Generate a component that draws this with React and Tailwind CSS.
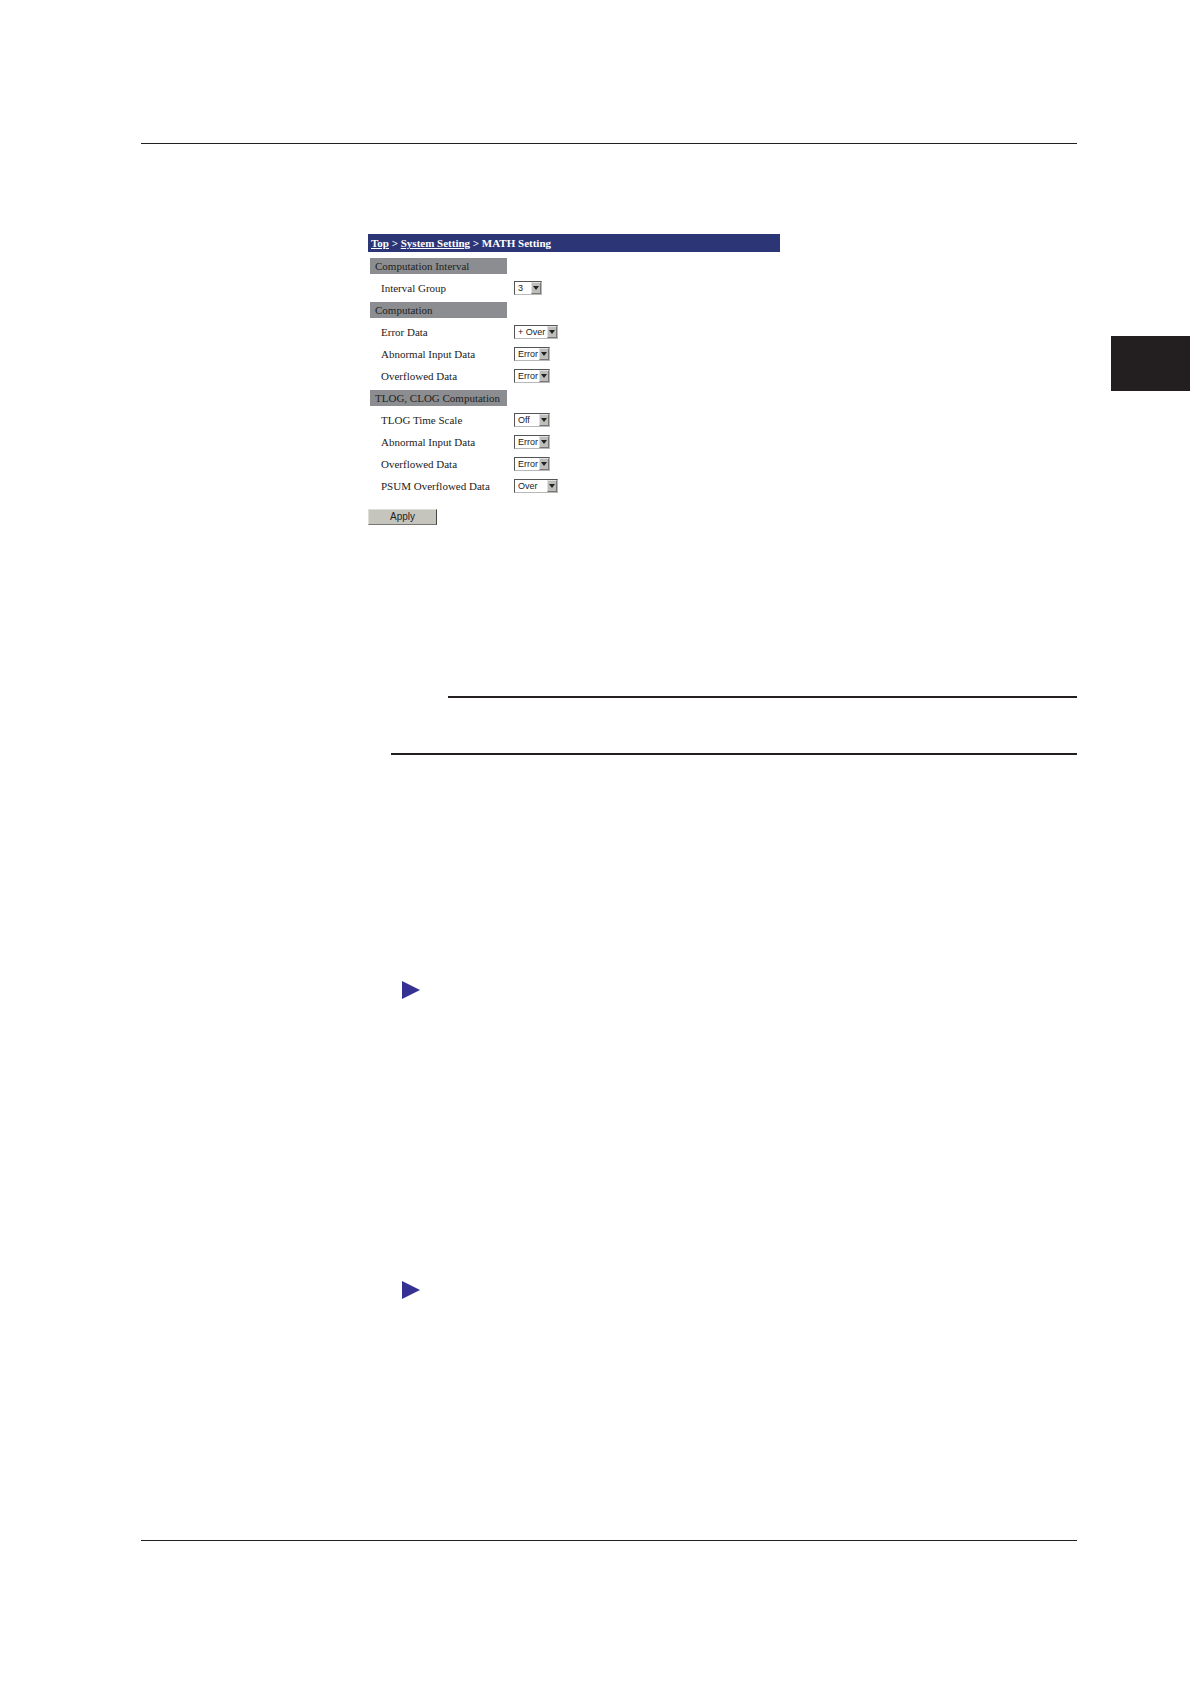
const sections = [
  {
    title: "Computation Interval",
    fields: [{ id: "interval-group", label: "Interval Group", value: "3", width: "w-7" }],
  },
  {
    title: "Computation",
    fields: [
      { id: "error-data", label: "Error Data", value: "+ Over", width: "w-11" },
      { id: "abnormal-input", label: "Abnormal Input Data", value: "Error", width: "w-9" },
      { id: "overflowed", label: "Overflowed Data", value: "Error", width: "w-9" },
    ],
  },
  {
    title: "TLOG, CLOG Computation",
    fields: [
      { id: "tlog-scale", label: "TLOG Time Scale", value: "Off", width: "w-9" },
      { id: "tlog-abnormal", label: "Abnormal Input Data", value: "Error", width: "w-9" },
      { id: "tlog-overflowed", label: "Overflowed Data", value: "Error", width: "w-9" },
      { id: "psum-overflowed", label: "PSUM Overflowed Data", value: "Over", width: "w-11" },
    ],
  },
];

function SelectField({ id, label, value, width }) {
  return (
    <div className="flex h-[22px] items-center">
      <label htmlFor={id} className="w-[133px] text-[11px] leading-4">{label}</label>
      <div className={`relative h-[14px] ${width}`}>
        <select
          id={id}
          defaultValue={value}
          className="block h-full w-full appearance-none border border-[#b8b8b8] border-t-[#555555] border-l-[#555555] bg-white pl-[3px] font-['Liberation_Sans',sans-serif] text-[9px] leading-3 text-[#222222]"
        >
          <option>{value}</option>
        </select>
        <span className="pointer-events-none absolute inset-y-px right-px flex w-[10px] items-center justify-center border border-[#777777] border-t-[#e0e0e0] border-l-[#e0e0e0] bg-[#bdbdb9]">
          <svg viewBox="0 0 6 4" className="h-1 w-[6px]" aria-hidden="true">
            <path d="M0 0h6L3 4z" fill="#222222" />
          </svg>
        </span>
      </div>
    </div>
  );
}

function Section({ title, fields }) {
  return (
    <fieldset>
      <div className="flex h-[22px] items-center pl-[2px]">
        <h2 className="h-4 w-[137px] bg-[#8b8d90] pl-[5px] text-[11px] leading-4">{title}</h2>
      </div>
      <div className="pl-[13px]">
        {fields.map((field) => (
          <SelectField key={field.id} {...field} />
        ))}
      </div>
    </fieldset>
  );
}

function Marker() {
  return (
    <svg viewBox="0 0 18 18" className="ml-[261px] size-[18px]" aria-hidden="true">
      <path d="M0 0L18 9L0 18z" fill="#353293" />
    </svg>
  );
}

export default function App() {
  return (
    <div className="flex bg-white font-['Liberation_Serif',serif] text-[#222222]">
      <main className="mr-[34px] ml-[141px] min-w-0 flex-1 pt-[143px] pb-[143px]">
        <hr className="border-t border-[#231f20]" />

        <form className="mt-[90px] ml-[227px] max-w-[412px]" onSubmit={(e) => e.preventDefault()}>
          <nav className="mb-[3px] h-[18px] bg-[#2c3576] pl-[3px] text-[11px] leading-[18px] font-bold text-white">
            <a href="#top" className="underline">Top</a>
            {" > "}
            <a href="#system" className="underline">System Setting</a>
            {" > MATH Setting"}
          </nav>
          {sections.map((section) => (
            <Section key={section.title} {...section} />
          ))}
          <button
            type="submit"
            className="mt-3 block h-4 w-[69px] border border-t-[#deded8] border-r-[#444444] border-b-[#777777] border-l-[#deded8] bg-[#c6c5bd] font-['Liberation_Sans',sans-serif] text-[10px] leading-3"
          >
            Apply
          </button>
        </form>

        <hr className="mt-[171px] ml-[307px] border-t-2 border-[#231f20]" />
        <hr className="mt-[55px] ml-[250px] border-t-2 border-[#231f20]" />

        <div className="mt-[226px] mb-[241px] flex flex-col gap-[282px]">
          <Marker />
          <Marker />
        </div>

        <hr className="border-t border-[#231f20]" />
      </main>
      <aside className="w-[79px] pt-[336px]">
        <div className="h-[55px] bg-[#231f20]" />
      </aside>
    </div>
  );
}
